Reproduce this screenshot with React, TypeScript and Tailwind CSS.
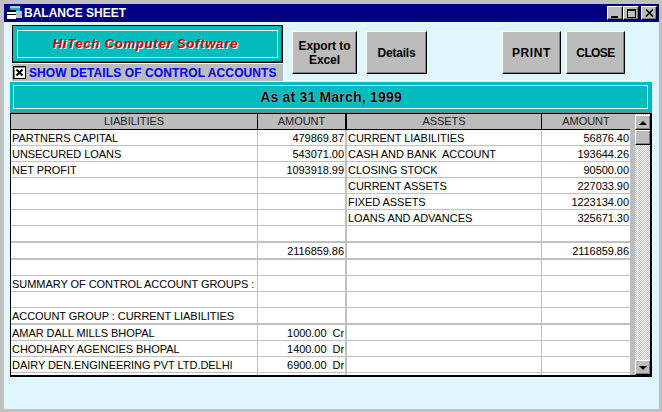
const rows: { l?: string; a?: string; r?: string; b?: string; h: string }[] = [
  { l: "PARTNERS CAPITAL", a: "479869.87", r: "CURRENT LIABILITIES", b: "56876.40", h: "h-4 border-b" },
  { l: "UNSECURED LOANS", a: "543071.00", r: "CASH AND BANK  ACCOUNT", b: "193644.26", h: "h-4 border-b" },
  { l: "NET PROFIT", a: "1093918.99", r: "CLOSING STOCK", b: "90500.00", h: "h-4 border-b" },
  { r: "CURRENT ASSETS", b: "227033.90", h: "h-4 border-b" },
  { r: "FIXED ASSETS", b: "1223134.00", h: "h-4 border-b" },
  { r: "LOANS AND ADVANCES", b: "325671.30", h: "h-4 border-b" },
  { h: "h-[17px] border-b-2" },
  { a: "2116859.86", b: "2116859.86", h: "h-[17px] border-b-2" },
  { h: "h-4 border-b" },
  { l: "SUMMARY OF CONTROL ACCOUNT GROUPS :", h: "h-4 border-b" },
  { h: "h-4 border-b" },
  { l: "ACCOUNT GROUP : CURRENT LIABILITIES", h: "h-[17px] border-b-2" },
  { l: "AMAR DALL MILLS BHOPAL", a: "1000.00  Cr", h: "h-4 border-b" },
  { l: "CHODHARY AGENCIES BHOPAL", a: "1400.00  Dr", h: "h-4 border-b" },
  { l: "DAIRY DEN.ENGINEERING PVT LTD.DELHI", a: "6900.00  Dr", h: "h-4 border-b" },
  { h: "h-4" },
];

const raised =
  "border border-t-white border-l-white border-r-black border-b-black bg-[#bcbcbc] shadow-[inset_-1px_-1px_0_#808080]";

function Btn({ w, t, children }: { w: string; t: string; children: React.ReactNode }) {
  return (
    <button className={`${w} ${t} h-[43px] ${raised} text-[12px] leading-[14px] font-bold text-black text-center`}>
      {children}
    </button>
  );
}

function Ctl({ children }: { children: React.ReactNode }) {
  return <div className={`w-4 h-[14px] ${raised} flex items-center justify-center`}>{children}</div>;
}

function Cell({ children, right, w }: { children?: string; right?: boolean; w: string }) {
  return (
    <div className={`${w} h-full shrink-0 pt-px flex items-center whitespace-pre border-inherit ${right ? "justify-end pr-px" : "pl-px"}`}>
      {children}
    </div>
  );
}

export default function App() {
  return (
    <div className="w-[662px] h-[412px] overflow-hidden bg-[#e0f6ff] border-t-4 border-l-4 border-r-[3px] border-b-[3px] border-[#c0c0c0] font-['Liberation_Sans',Arial,sans-serif] text-black flex flex-col">
      <div className="h-[18px] shrink-0 bg-[#000080] flex items-center pl-[2px] pr-[2px]">
        <svg width="16" height="14" viewBox="0 0 16 14" className="shrink-0">
          <rect x="4" y="0" width="10" height="8" fill="#00b8c0" />
          <rect x="4" y="0" width="10" height="2" fill="#c0c0c0" />
          <rect x="8" y="5" width="8" height="7" fill="#c0c0c0" />
          <rect x="1" y="4" width="9" height="9" fill="#ffffff" />
          <rect x="1" y="4" width="9" height="2" fill="#000000" />
          <rect x="1" y="8" width="9" height="1" fill="#000000" />
        </svg>
        <span className="ml-[2px] text-white text-[12px] font-bold leading-none">BALANCE SHEET</span>
        <div className="ml-auto flex">
          <Ctl>
            <div className="w-[7px] h-[2px] bg-black mt-[7px] mr-[2px]" />
          </Ctl>
          <Ctl>
            <div className="w-[9px] h-[9px] border border-black border-t-2" />
          </Ctl>
          <div className="ml-[2px]">
            <Ctl>
              <svg width="9" height="8" viewBox="0 0 9 8">
                <path d="M1 0.5 L8 7.5 M8 0.5 L1 7.5" stroke="#000" strokeWidth="1.6" />
              </svg>
            </Ctl>
          </div>
        </div>
      </div>

      <div className="flex-1 min-h-0">
        <div className="flex h-[60px] pl-2 pt-[3px]">
          <div className="w-[271px] shrink-0">
            <div className="h-[38px] bg-[#00bcbc] border border-black shadow-[inset_-1px_-1px_0_#444] p-1">
              <div className="h-full border border-white flex items-center justify-center pr-[4px]">
                <span className="text-[#e00000] italic font-bold text-[13px] tracking-[0.8px] [text-shadow:1px_1px_0_#fff]">
                  HiTech Computer Software
                </span>
              </div>
            </div>
            <div className="mt-px h-[17px] bg-[#bcbcbc] flex items-center">
              <div className="w-[13px] h-[13px] ml-[1px] bg-white border border-black flex items-center justify-center shadow-[inset_1px_1px_0_#808080]">
                <svg width="9" height="9" viewBox="0 0 9 9">
                  <path d="M1.5 1.5 L7.5 7.5 M7.5 1.5 L1.5 7.5" stroke="#000" strokeWidth="2" />
                </svg>
              </div>
              <span className="ml-[3px] text-[#0000ff] font-bold text-[12px] tracking-[0.1px] whitespace-nowrap">
                SHOW DETAILS OF CONTROL ACCOUNTS
              </span>
            </div>
          </div>
          <div className="ml-[9px] mt-[6px] flex items-start">
            <Btn w="w-[65px]" t="tracking-[-0.1px]">
              Export to
              <br />
              Excel
            </Btn>
            <div className="ml-[9px]">
              <Btn w="w-[61px]" t="tracking-[-0.2px]">Details</Btn>
            </div>
            <div className="ml-[75px]">
              <Btn w="w-[59px]" t="tracking-[0.6px]">PRINT</Btn>
            </div>
            <div className="ml-[5px]">
              <Btn w="w-[59px]" t="tracking-[-0.6px]">CLOSE</Btn>
            </div>
          </div>
        </div>

        <div className="mx-[6px] w-[642px] h-[31px] bg-[#00bcbc] border-r border-b border-[#808080] p-[3px]">
          <div className="h-full border-t border-l border-[#808080] flex items-center justify-center outline outline-1 outline-white -outline-offset-1">
            <span className="text-[14px] font-bold tracking-[0.2px] text-black [text-shadow:0_0_1px_#fff]">As at 31 March, 1999</span>
          </div>
        </div>

        <div className="ml-[6px] w-[642px] h-[264px] border-t border-l border-r-2 border-b-2 border-black bg-white flex overflow-hidden">
          <div className="w-[619px] shrink-0 text-[11px] tracking-[-0.05px] leading-none">
            <div className="h-4 flex bg-[#bcbcbc] border-b border-black text-[#222]">
              <div className="w-[247px] border-r border-black flex items-center justify-center">LIABILITIES</div>
              <div className="w-[89px] border-r-2 border-black flex items-center justify-center">AMOUNT</div>
              <div className="w-[195px] border-r border-black flex items-center justify-center">ASSETS</div>
              <div className="w-[88px] flex items-center justify-center">AMOUNT</div>
            </div>
            {rows.map((r, i) => (
              <div key={i} className={`${r.h} flex border-[#c0c0c0]`}>
                <Cell w="w-[247px] border-r">{r.l}</Cell>
                <Cell w="w-[89px] border-r-2" right>{r.a}</Cell>
                <Cell w="w-[195px] border-r">{r.r}</Cell>
                <Cell w="w-[88px]" right>{r.b}</Cell>
              </div>
            ))}
          </div>
          <div className="flex-1 bg-[#bcbcbc] pl-[5px] flex">
            <div className="w-[16px] flex flex-col pt-px h-full bg-[repeating-conic-gradient(#ffffff_0_25%,#c0c0c0_0_50%)] bg-[length:2px_2px]">
              <div className={`w-[16px] h-[15px] ${raised} flex items-center justify-center`}>
                <div className="w-0 h-0 border-x-[4px] border-x-transparent border-b-[4px] border-b-black" />
              </div>
              <div className={`w-[16px] h-[15px] ${raised}`} />
              <div className="flex-1" />
              <div className={`w-[16px] h-[15px] ${raised} flex items-center justify-center`}>
                <div className="w-0 h-0 border-x-[4px] border-x-transparent border-t-[4px] border-t-black" />
              </div>
            </div>
          </div>
        </div>
      </div>
    </div>
  );
}
